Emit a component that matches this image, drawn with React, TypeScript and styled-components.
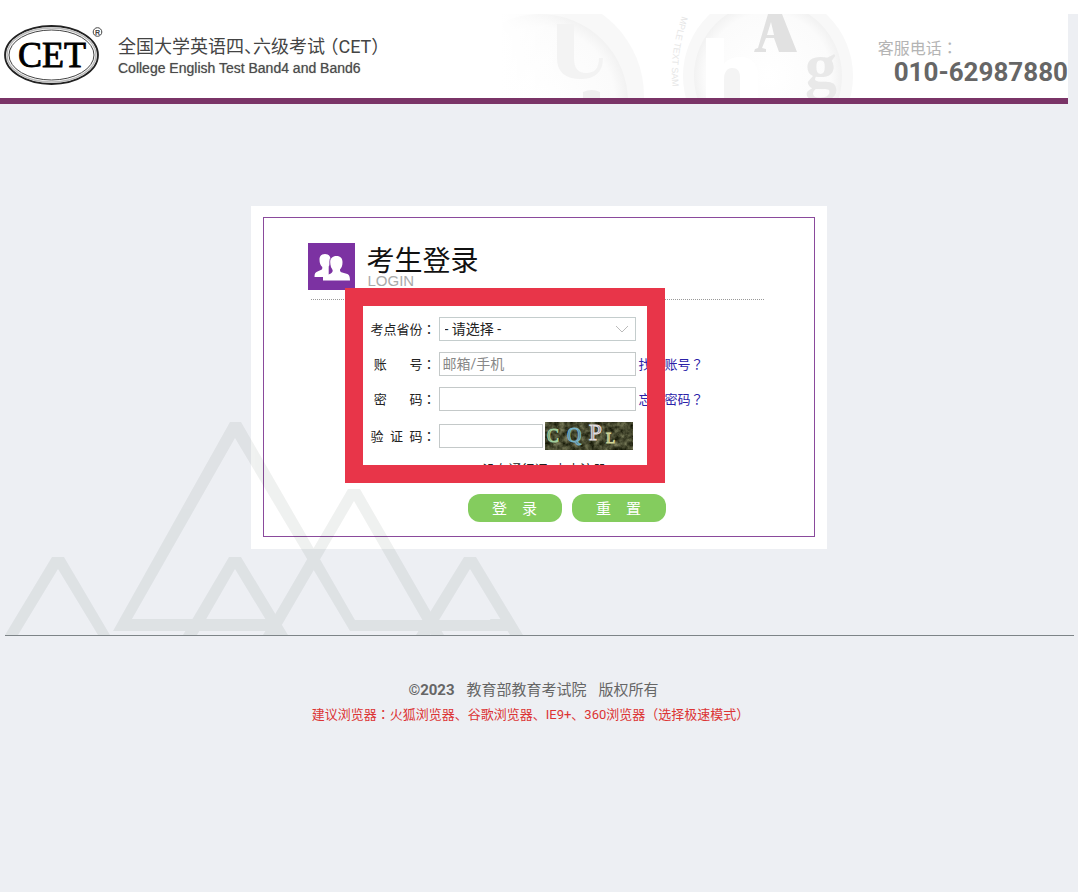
import React from "react";
import styled, { createGlobalStyle } from "styled-components";

const Global = createGlobalStyle`
  *, *::before, *::after { box-sizing: border-box; }
  body {
    margin: 0;
    background: #edeff3;
    color: #222;
    font-family: Roboto, "Noto Sans CJK SC", sans-serif;
    font-size: 13px;
  }
  input, select, button { font-family: inherit; }
`;

const TopStrip = styled.div`
  height: 14px;
  background: #fff;
`;

const Header = styled.header`
  position: relative;
  display: flex;
  align-items: flex-start;
  justify-content: space-between;
  height: 90px;
  margin-right: 10px;
  background: #fff;
  border-bottom: 6px solid #7a3467;
`;

const Brand = styled.div`
  position: relative;
  display: flex;
  gap: 14px;
  padding: 10px 0 0 4px;
`;

const Names = styled.div`
  display: flex;
  flex-direction: column;
  padding-top: 11px;
  color: #4a4a4a;
`;

const ChineseName = styled.span`
  font-size: 18px;
  line-height: 24px;
  font-feature-settings: "halt";
  color: #444;
`;

const EnglishName = styled.span`
  font: 14px/18px "Liberation Sans", sans-serif;
  text-shadow: 0 0 1px #999;
`;

const HeaderArt = styled.svg`
  position: absolute;
  top: 0;
  right: 200px;
`;

const Hotline = styled.div`
  position: relative;
  display: flex;
  flex-direction: column;
  padding-top: 21px;
`;

const HotlineLabel = styled.span`
  font-size: 16px;
  line-height: 24px;
  color: #b4b4b4;
`;

const HotlineNumber = styled.strong`
  padding-left: 16px;
  font-size: 26px;
  line-height: 22px;
  color: #666;
`;

const Stage = styled.main`
  position: relative;
  display: flex;
  justify-content: center;
  margin: 0 4px 0 5px;
  padding: 102px 2px 86px 0;
  border-bottom: 1px solid #7d8487;
`;

const Mountains = styled.svg`
  position: absolute;
  left: 0;
  bottom: 0;
  pointer-events: none;
`;

const Card = styled.section`
  position: relative;
  width: 576px;
  max-width: 100%;
  padding: 11px 12px 12px;
  background: #fff;
`;

const Frame = styled.div`
  padding: 25px 44px 14px;
  border: 1px solid #8a4a9c;
`;

const TitleRow = styled.div`
  display: flex;
  gap: 12px;
  height: 48px;
`;

const TitleText = styled.div`
  display: flex;
  flex-direction: column;
`;

const Title = styled.h1`
  margin: 0;
  font-size: 28px;
  font-weight: 400;
  line-height: 38px;
  color: #111;
`;

const Subtitle = styled.span`
  margin-top: -6px;
  padding-left: 1px;
  font: 15px/12px "Liberation Sans", sans-serif;
  color: #aaa;
`;

const Divider = styled.hr`
  margin: 8px 6px 17px 3px;
  border: 0;
  border-top: 1px dotted #999;
`;

const Form = styled.form`
  display: flex;
  flex-direction: column;
  gap: 11px;
  padding-left: 62px;
`;

const Field = styled.div`
  display: flex;
  align-items: center;
  height: 24px;
`;

const CodeField = styled(Field)`
  height: 28px;
  gap: 2px;
`;

const Label = styled.label<{ $tight?: boolean }>`
  width: ${(p) => (p.$tight ? 67 : 69)}px;
  padding: 0 ${(p) => (p.$tight ? 1 : 3)}px 2px 0;
  text-align: right;
  white-space: pre;
`;

const Wide = styled.span`
  font-family: "Noto Sans CJK JP", sans-serif;
`;

const TextInput = styled.input<{ $short?: boolean }>`
  width: ${(p) => (p.$short ? 104 : 197)}px;
  height: 24px;
  padding: 0 3px;
  border: 1px solid #c4c9c9;
  background: #fff;
  font-size: 14px;
  outline: none;
  &::placeholder { color: #888; }
`;

const SelectWrap = styled.div`
  position: relative;
`;

const Select = styled.select`
  appearance: none;
  display: block;
  width: 197px;
  height: 24px;
  padding: 0 24px 0 5px;
  border: 1px solid #c4cdcd;
  border-radius: 0;
  background: #fff;
  color: #222;
  font-size: 14px;
`;

const Chevron = styled.svg`
  position: absolute;
  right: 7px;
  top: 8px;
  pointer-events: none;
`;

const Link = styled.a`
  padding: 0 0 2px 3px;
  color: #2b22a8;
  text-decoration: none;
`;

const Hint = styled.a`
  display: block;
  margin-top: 10px;
  padding-left: 175px;
  line-height: 20px;
  color: #222;
  text-decoration: none;
  white-space: pre;
`;

const Actions = styled.div`
  display: flex;
  gap: 10px;
  padding: 14px 0 0 160px;
`;

const Button = styled.button`
  width: 94px;
  height: 28px;
  padding: 0 0 2px;
  border: 0;
  border-radius: 12px;
  background: #84cc5e;
  color: #fff;
  font-size: 15px;
`;

const Highlight = styled.div`
  position: absolute;
  left: 94px;
  top: 82px;
  width: 320px;
  height: 195px;
  border: 18px solid #e83549;
  pointer-events: none;
  z-index: 2;
`;

const Footer = styled.footer`
  display: flex;
  flex-direction: column;
  align-items: center;
  padding: 42px 17px 0 0;
`;

const Copyright = styled.p`
  display: flex;
  gap: 12px;
  margin: 0;
  padding-left: 6px;
  font-size: 15px;
  line-height: 24px;
  color: #666;
`;

const Browsers = styled.p`
  margin: 0;
  line-height: 24px;
  color: #dc3434;
`;

function CetLogo() {
  return (
    <svg width="100" height="62" viewBox="0 0 100 62" overflow="visible" aria-label="CET">
      <ellipse cx="47.500" cy="31" rx="46.500" ry="29" fill="#fff" stroke="#222" strokeWidth="1.800" />
      <ellipse cx="47.500" cy="31" rx="44.500" ry="27" fill="none" stroke="#bbb" strokeWidth="1.500" />
      <ellipse cx="47.500" cy="31" rx="42.500" ry="25" fill="none" stroke="#444" strokeWidth="1" />
      <text x="48" y="43" textAnchor="middle" fontFamily="Liberation Serif, serif" fontSize="36" fill="#000" stroke="#000" strokeWidth="0.900">CET</text>
      <circle cx="93.500" cy="8" r="4.300" fill="none" stroke="#444" strokeWidth="1" />
      <text x="93.500" y="10.500" textAnchor="middle" fontFamily="Liberation Sans, sans-serif" fontSize="7" fontWeight="700" fill="#444">R</text>
    </svg>
  );
}

function Art() {
  return (
    <HeaderArt width="368" height="84" viewBox="500 14 368 84" aria-hidden="true">
      <defs>
        <linearGradient id="fade" x1="0" x2="1" y1="0" y2="0">
          <stop offset="0" stopColor="#fff" />
          <stop offset="0.500" stopColor="#f8f8f8" />
          <stop offset="1" stopColor="#f8f8f8" />
        </linearGradient>
        <radialGradient id="disc">
          <stop offset="0" stopColor="#fff" />
          <stop offset="0.850" stopColor="#fbfbfb" />
          <stop offset="1" stopColor="#f2f2f2" />
        </radialGradient>
        <linearGradient id="veil" x1="0" x2="1" y1="0" y2="0">
          <stop offset="0" stopColor="#fff" />
          <stop offset="1" stopColor="#fff" stopOpacity="0" />
        </linearGradient>
        <path id="ring" d="M682 16C673 42 669 70 674 97" />
      </defs>
      <circle cx="543" cy="96" r="101" fill="url(#fade)" />
      <circle cx="540" cy="102" r="88" fill="url(#disc)" />
      <rect x="500" y="14" width="70" height="84" fill="url(#veil)" />
      <path d="M557 24h17v34c0 10 4 15 12 15 9 0 13-5 13-15h4c0 14-8 21-22 21-16 0-24-7-24-21z" fill="#f3f3f3" />
      <path d="M583 92q9-4 17 0v6h-17z" fill="#efefef" />
      <text fontFamily="Liberation Sans, sans-serif" fontSize="9" fill="#e6e6e6">
        <textPath href="#ring">MPLE TEXT SAM</textPath>
      </text>
      <circle cx="768" cy="76" r="85" fill="#f8f8f8" />
      <circle cx="768" cy="76" r="74" fill="url(#disc)" />
      <path d="M706 38h18v26c4-5 9-7 16-7 12 0 18 7 18 19v22h-18V77c0-6-2-9-7-9s-9 4-9 10v20h-18z" fill="#fff" />
      <path d="M724 98V80c0-8 3-12 8-12s8 3 8 9v21z" fill="#f4f4f4" />
      <path d="M768 14h14l15 38h-18l-5-14h-8l-4 10 4 1v3h-12l1-3 3-1zM767 35h7l-3-13z" fillRule="evenodd" fill="#e1e1e1" />
      <text x="805" y="87" fontSize="64" fontFamily="Liberation Serif, serif" fontWeight="700" fill="#e9e9e9">g</text>
    </HeaderArt>
  );
}

function PeopleIcon() {
  return (
    <svg width="47" height="47" viewBox="0 0 47 47" aria-hidden="true">
      <rect width="47" height="47" fill="#7c32a2" />
      <path fill="#fff" d="M17 11c3.500 0 5.500 2 5.500 5.500 0 3-.6 5.500-1.800 7V34H6.500c0-3.500.8-4.800 3-5.600l3.800-1.600c.8-.4 1-1 1-2.800-1.800-1.600-2.800-4-2.800-7.500C11.500 13 13.500 11 17 11z" />
      <path fill="#fff" d="M28.500 13c4 0 6 2.300 6 6.300 0 3.200-.8 5.500-2.500 7.200 0 1.700.3 2.300 1.300 2.700l5.200 1.600c2.600.8 3.500 2.500 3.500 6.700H15v-3.500l5.500-2.500c3-1.200 4.200-1.800 4.200-4.500-1.700-1.700-2.500-4.200-2.500-7.700 0-4 2.300-6.300 6.300-6.300z" />
      <path fill="none" stroke="#7c32a2" strokeWidth="0.700" d="M22.300 15.500c-.6 1.300-.8 2.700-.7 4.500 0 2.500.8 4.500 2 6" />
    </svg>
  );
}

function Captcha() {
  return (
    <svg width="88" height="28" viewBox="0 0 88 28" role="img" aria-label="验证码">
      <defs>
        <filter id="grain" x="0" y="0" width="100%" height="100%" colorInterpolationFilters="sRGB">
          <feTurbulence type="fractalNoise" baseFrequency="0.2" numOctaves="3" seed="4" />
          <feColorMatrix values="0.6 0 0 0 -0.02  0.6 0 0 0 -0.01  0.5 0 0 0 -0.06  0 0 0 0 1" />
        </filter>
      </defs>
      <rect width="88" height="28" fill="#44452f" />
      <rect width="88" height="28" filter="url(#grain)" />
      <g fontFamily="Liberation Serif, serif" strokeWidth="1">
        <text x="2" y="20" fontSize="18" fill="#6d8468" stroke="#a3cf9d">C</text>
        <text x="22" y="20" fontSize="20" fill="#54818e" stroke="#78b4c8">Q</text>
        <text x="44" y="18" fontSize="23" fill="#8d8b8b" stroke="#e3dfe3">P</text>
        <text x="61" y="21" fontSize="15" fill="#80845f" stroke="#d2d79a">L</text>
      </g>
    </svg>
  );
}

function MountainArt() {
  return (
    <Mountains width="520" height="216" viewBox="5 419 520 216" aria-hidden="true">
      <g fill="#002010" opacity="0.06">
        <path d="M52 557h12l46 78H98L58 569 18 635H5z" />
        <path fillRule="evenodd" d="M230 422h11L355 620h140v11H350L235 438 132 619h140v12H113z" />
        <path d="M229 557h12l47 78h-13l-40-66-38 66h-14z" />
        <path d="M348 489h12l84 146h-13L354 501l-78 134h-13z" />
        <path d="M464 557h12l47 78h-13l-40-66-40 66h-14z" />
        <path d="M490 619h12l7 12h-14z" />
      </g>
    </Mountains>
  );
}

export default function App() {
  return (
    <>
      <Global />
      <TopStrip />
      <Header>
        <Art />
        <Brand>
          <CetLogo />
          <Names>
            <ChineseName>全国大学英语四、六级考试 （CET）</ChineseName>
            <EnglishName>College English Test Band4 and Band6</EnglishName>
          </Names>
        </Brand>
        <Hotline>
          <HotlineLabel>客服电话<Wide>：</Wide></HotlineLabel>
          <HotlineNumber>010-62987880</HotlineNumber>
        </Hotline>
      </Header>
      <Stage>
        <Card>
          <Frame>
            <TitleRow>
              <PeopleIcon />
              <TitleText>
                <Title>考生登录</Title>
                <Subtitle>LOGIN</Subtitle>
              </TitleText>
            </TitleRow>
            <Divider />
            <Form onSubmit={(e) => e.preventDefault()}>
              <Field>
                <Label htmlFor="province">考点省份<Wide>：</Wide></Label>
                <SelectWrap>
                  <Select id="province">
                    <option>- 请选择 -</option>
                  </Select>
                  <Chevron width="14" height="9" viewBox="0 0 14 9" fill="none" stroke="#bbb">
                    <path d="M1 1l6 6 6-6" />
                  </Chevron>
                </SelectWrap>
              </Field>
              <Field>
                <Label htmlFor="account">{"账\u3000   号"}<Wide>：</Wide></Label>
                <TextInput id="account" placeholder="邮箱/手机" />
                <Link href="#account">找回账号<Wide>？</Wide></Link>
              </Field>
              <Field>
                <Label htmlFor="password">{"密\u3000   码"}<Wide>：</Wide></Label>
                <TextInput id="password" type="password" />
                <Link href="#password">忘记密码<Wide>？</Wide></Link>
              </Field>
              <CodeField>
                <Label htmlFor="code" $tight>{"验  证  码"}<Wide>：</Wide></Label>
                <TextInput id="code" $short />
                <Captcha />
              </CodeField>
            </Form>
            <Hint href="#register">{"没有通行证  点击注册"}</Hint>
            <Actions>
              <Button type="submit">登　录</Button>
              <Button type="reset">重　置</Button>
            </Actions>
          </Frame>
          <Highlight />
        </Card>
        <MountainArt />
      </Stage>
      <Footer>
        <Copyright><strong>©2023</strong><span>教育部教育考试院</span><span>版权所有</span></Copyright>
        <Browsers>建议浏览器<Wide>：</Wide>火狐浏览器、谷歌浏览器、IE9+、360浏览器（选择极速模式）</Browsers>
      </Footer>
    </>
  );
}
